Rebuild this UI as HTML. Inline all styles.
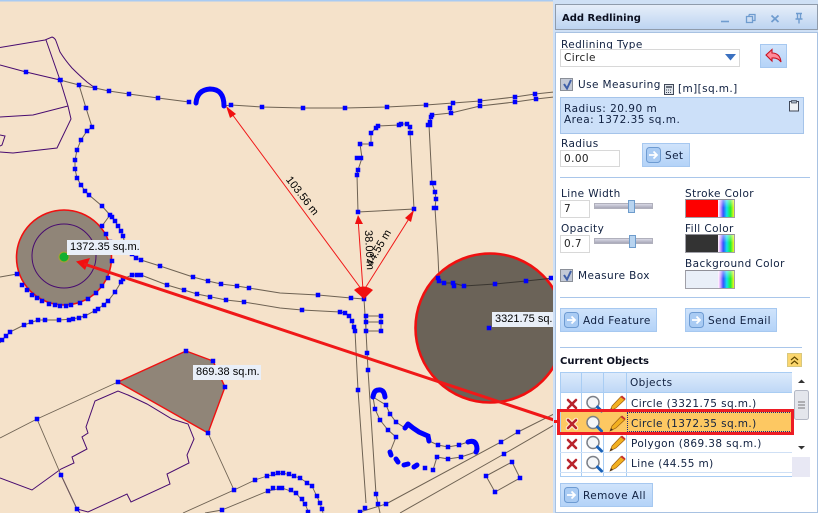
<!DOCTYPE html>
<html><head><meta charset="utf-8">
<style>
html,body{margin:0;padding:0;width:818px;height:513px;overflow:hidden;background:#f5e2ca}
*{box-sizing:border-box}
#map{position:absolute;left:0;top:0}
#panel{position:absolute;left:554px;top:0;width:264px;height:513px;background:#cfe0f5;overflow:hidden}
.a{position:absolute}
.t{position:absolute;font:10.5px "DejaVu Sans",sans-serif;letter-spacing:.4px;color:#102040;white-space:nowrap;line-height:12px;margin-top:1px}
.in{position:absolute;background:#fff;border:1px solid #d8d8d8;font:10.5px "DejaVu Sans",sans-serif;letter-spacing:.4px;color:#222;padding:1px 0 0 3px;white-space:nowrap}
.btn{position:absolute;background:linear-gradient(#cfe3fb,#b4d3f8);border:1px solid #a6c8f0;font:10.5px "DejaVu Sans",sans-serif;letter-spacing:.4px;color:#102040;white-space:nowrap;line-height:22px}
.btn svg{position:absolute;left:3px;top:3px}
.btn span{position:absolute;top:1px}
.hr{position:absolute;height:1px;background:#a9c6ea}
.cb{position:absolute;width:13px;height:13px;background:#c3c9d6;border:1px solid #8a8f98}
.sw{position:absolute;left:131px;width:50px;height:19px;border:1px solid #a0a0a8;border-top-color:#909098}
.sw i{position:absolute;left:32px;top:0;width:16px;height:17px;background:linear-gradient(rgba(255,255,255,.45),rgba(255,255,255,0) 45%),linear-gradient(90deg,#fff 0,rgba(255,255,255,0) 35%),linear-gradient(90deg,#f020f0,#3040ff 30%,#10e0f0 55%,#20f030 78%,#f8f820)}
.trk{position:absolute;left:40px;width:59px;height:6px;background:linear-gradient(#d8d8e4,#a8a8b8);border:1px solid #b0b0bc}
.th{position:absolute;width:7px;height:13px;background:#b8d4f0;border:1px solid #6e9ccc}
.ln{position:absolute;background:#a9cdf3}
.cell{position:absolute;font:10.5px "DejaVu Sans",sans-serif;letter-spacing:.4px;color:#102040;white-space:nowrap;line-height:20px;left:77px;margin-top:1px}
.ml{position:absolute;font:11px "Liberation Sans",sans-serif;color:#000;white-space:nowrap;line-height:14px}
.box{background:#e9eff8;padding-left:3px;height:15px}
</style></head>
<body>
<svg id="map" width="554" height="513" viewBox="0 0 554 513" xmlns="http://www.w3.org/2000/svg">
<rect width="554" height="513" fill="#f5e2ca"/>
<rect width="554" height="1.5" fill="#a9cbf2"/>
<g fill="none" stroke="#480c70" stroke-width="1">
<path d="M0 47.500L45 40L52 37Q55 38 56 41L60 52Q65 60 72 68Q80 76 87 82L95 88"/>
<path d="M46 40L60 80L68 106L71 119L57 148L13 153L0 152"/>
<path d="M0 117L33 115L68 106"/>
<path d="M0 65L26 72L60 80"/>
<path d="M0 135L5 136L2 145L0 146"/>
<path d="M0 478L32 490L61 469L74 463L72 457L87 449L82 437L88 433L86 427L95 401L118 391L128 395L147 404L172 419L188 424L194 439L187 455L189 463L167 474L170 484L131 502L127 494L88 512L77 509L61 475"/>
<path d="M77 509L80 513"/>
</g>
<g fill="none" stroke="#6e6253" stroke-width="1">
<path d="M60 80L79 85L95 88L109 91L129 94L158 98L189 102M224 106L231 105L262 107L303 108L345 108L387 107L426 105L453 103L480 101L515 97L535 94L554 92"/>
<path d="M429 125L430 122L431 117L432 115L451 113L480 106L515 102L536 99L554 97M453 103L450 108L451 113"/>
<path d="M429 125L432 183L435 192L436 199L435 208L438 256L439 279"/>
<path d="M358 212L414 209L410 133L410 127L407 124L401 124L399 125L378 126L376 128L371 133L371 144L360 144L362 158L358 170L357 175L358 212"/>
<path d="M79 85L86 108L92 127L87 131L81 140L77 150L75 160L75 169L77 178L81 185L85 191L89 195L102 206L110 215L115 221L118 226L121 231L123 236L125 244"/>
<path d="M110 215L102 226"/>
<path d="M136 258L141 260L160 266L193 277L208 281L221 284L237 286L249 288L280 293L318 295L351 298L364 299"/>
<path d="M0 277L17 274"/>
<path d="M141 275L132 275L123 279L115 292L108 301L98 309L85 316L73 319L59 320L38 320L24 325L10 332L2 340L0 343"/>
<path d="M141 275L167 285L184 290L197 294L226 300L244 302L280 308L302 310L340 312L345 313L349 316L352 321L355 331L358 390L366 503"/>
<path d="M364 299L366 331L368 370L376 494L380 513"/>
<path d="M366 316H381V331H366V316M366 322H381" stroke-width=".9"/>
<path d="M373 397L386 405L390 414L396 422L405 428M429 441L438 445L448 447L459 445L468 442M476 452L461 457L448 459L437 457L433 470M390 452L396 437L388 430L380 420L375 409L373 397"/>
<path d="M360 512L386 504L501 442L518 432L554 414M400 513L504 454L554 425"/>
<path d="M512 462L520 478L495 492L486 476Z"/>
<path d="M118 382L37 419L0 438M37 419L61 475L77 509M208 433L234 490L183 513M234 490L255 480L267 476L283 473L300 478L312 486L320 503L323 513M222 510L268 491L282 488L296 493L305 504L309 513" stroke-width=".9"/>
<path d="M222 510L205 513"/>
</g>
<circle cx="64" cy="257.500" r="47.500" fill="#908578" stroke="#f01010" stroke-width="1.600"/>
<circle cx="64" cy="256" r="32" fill="none" stroke="#480c70" stroke-width="1"/>
<path d="M118 382L186 351L213 361L225 387L208 433Z" fill="#908578" stroke="#f01010" stroke-width="1.400"/>
<circle cx="490" cy="328" r="74.500" fill="#6b6358" stroke="#f01010" stroke-width="2.600"/>
<path d="M439 281L444 283L453 283L464 286L495 284L526 281L554 278" fill="none" stroke="#3a3630" stroke-width="1"/>
<g fill="none" stroke="#00f" stroke-linecap="round">
<path d="M196 103Q197 90 210 89Q224 89 224 106" stroke-width="5"/>
<path d="M373 397Q374 390 378.500 390Q384 389 385 397" stroke-width="5"/>
<path d="M468 442Q474 440 476 444Q478 449 476 452" stroke-width="5"/>
<path d="M405 428L408 424M408 424L413 428L419 432L428 436L429 441M390 452L391 455M396 459L398 462M404 465L408 464M414 467L417 465" stroke-width="5"/>
</g>
<path stroke="#00f" stroke-width="4.500" stroke-linecap="square" fill="none" d="M26 72h0M60 80h.5M79 85h0M95 88h0M109 91h0M129 94h0M158 98h0M189 102h0M231 105h0M262 107h0M303 108h0M345 108h0M387 107h0M426 105h0M453 103h0M480 101h0M515 97h0M535 94h0M450 108h0M451 113h0M480 106h0M515 102h0M536 99h0M432 115h0M431 117h0M430 122h0M428 125h2M432 183h2M435 192h0M436 199h0M434 208h2M358 212h0M414 209h0M410 133h1M410 127h0M407 124h0M401 124h0M399 125h0M378 126h0M376 128h0M371 133h0M371 144h0M360 144h0M357 158h4M358 170h0M357 175h0M86 108h0M92 127h0M87 131h0M81 140h0M77 150h0M75 160h0M75 169h0M77 178h0M81 185h0M85 191h0M89 195h0M102 206h0M110 215h0M112 217h0M115 221h0M118 226h0M121 231h0M123 236h0M125 244h0M128 250h0M132 254h0M136 258h0M141 260h0M160 266h0M193 277h0M208 281h0M221 284h0M237 286h0M249 288h0M318 295h0M351 298h0M364 299h0M102 226h0M106 234h0M110 242h0M111 252h0M112 261h0M108 278h0M102 286h0M96 293h0M88 299h0M80 303h0M71 305h0M66 306h0M60 306h0M55 305h0M49 304h0M42 301h0M37 298h0M32 295h0M27 290h0M22 285h0M17 274h0M141 275h0M137 275h0M132 275h0M123 279h0M121 282h0M115 292h0M108 301h0M104 305h0M98 309h0M95 311h0M85 316h0M79 318h0M73 319h0M69 320h0M59 320h0M45 320h0M38 320h0M31 322h0M24 325h0M10 332h0M6 336h0M2 340h0M167 285h0M184 290h0M197 294h0M210 297h0M226 300h0M244 302h0M302 310h0M340 312h0M345 313h0M349 316h0M352 321h0M354 327h0M355 331h0M358 390h0M365 508h0M360 512h0M366 316h0M381 316h0M381 322h0M381 331h0M366 331h0M366 322h0M367 353h0M368 370h0M376 494h0M378 504h0M386 504h0M386 405h0M390 414h0M396 422h0M438 445h0M448 447h0M459 445h0M461 457h0M448 459h0M437 457h0M433 470h0M425 468h0M396 437h0M388 430h0M380 420h0M375 409h0M501 442h0M518 432h0M504 454h0M512 462h0M520 478h0M495 492h0M486 476h0M438 278h0M439 281h0M444 283h0M453 283h0M454 286h0M464 286h0M495 284h0M526 281h0M551 278h0M489 328h0M118 382h0M186 351h0M213 361h0M225 387h0M208 433h0M37 419h0M61 475h0M77 509h0M234 490h0M255 480h0M267 476h0M273 474h0M278 473h0M222 510h0M268 491h0M273 488h0M279 488h0M283 473h0M289 474h0M294 476h0M300 478h0M307 483h0M312 486h0M317 496h0M320 503h0M322 509h0M282 488h0M291 490h0M296 493h0M302 499h0M305 504h0M308 512h0"/>
<g stroke="#f01818" stroke-width="1" fill="none">
<path d="M362 290L229 110M363 290L358 218M364 290L412 214"/>
</g>
<g fill="#f01010">
<path d="M226 106L236 114L230 118Z"/>
<path d="M358 215L363 224L355 224Z"/>
<path d="M414 210L411 222L405 218Z"/>
<path d="M354 290Q363 283 373 290L364 299Z"/>
<path d="M76 261.500L90 258L85 270Z"/>
</g>
<path d="M84 264L557 421" stroke="#f01818" stroke-width="3" fill="none"/>
<circle cx="64" cy="257" r="5" fill="#12b030" stroke="#a8a030" stroke-width="1"/>
</svg>
<div class="ml box" style="left:67px;top:240px;width:73px">1372.35 sq.m.</div>
<div class="ml box" style="left:193px;top:365px;width:68px">869.38 sq.m.</div>
<div class="ml box" style="left:492px;top:312px;width:62px;overflow:hidden">3321.75 sq.m.</div>
<div class="ml" style="left:279px;top:189px;transform:rotate(52deg)">103.56 m</div>
<div class="ml" style="left:349px;top:243px;transform:rotate(87deg)">38.00 m</div>
<div class="ml" style="left:359px;top:241px;transform:rotate(-60deg)">44.55 m</div>
<div class="a" style="left:553px;top:0;width:1px;height:513px;background:#cfe0f5"></div>

<div id="panel">
<div class="a" style="left:1px;top:4px;width:263px;height:26px;background:linear-gradient(#e6eef9,#bdd4f1);border:1px solid #8f9bab"></div>
<div class="a" style="left:1px;top:32px;width:263px;height:481px;background:#fff;border:1px solid #a8c2e2"></div>
<div class="t" style="left:8px;top:12px;font-weight:bold;font-size:10px;letter-spacing:0;color:#0c1020">Add Redlining</div>
<svg class="a" style="left:165px;top:10px" width="90" height="14" fill="none" stroke="#6f9ccf" stroke-width="1.600"><path d="M2 11.500H10"/><path d="M30 4.500h6v6h-2M30 4.500v2M27.500 6.500h6v6h-6z" stroke-width="1.300"/><path d="M52.500 5.500L59.500 12M59.500 5.500L52.500 12" stroke-width="1.800"/><path d="M77 3.500h6M78.500 4v5h3V4M76.500 9h7M80 9.500v4" stroke-width="1.400"/></svg>

<div class="t" style="left:7px;top:38px">Redlining Type</div>
<div class="in" style="left:6px;top:49px;width:180px;height:18px;line-height:15px">Circle</div>
<svg class="a" style="left:171px;top:54px" width="12" height="8"><path d="M0 0H11L5.500 6.500Z" fill="#3a70c0"/></svg>
<div class="btn" style="left:206px;top:44px;width:27px;height:24px"><svg style="left:4px;top:3px" width="18" height="16"><path d="M1 7L7 1.500V5Q15 5 16 14Q13 9.500 7 10V13Z" fill="#ff8a98" stroke="#c81020" stroke-width="1.100"/></svg></div>

<div class="cb" style="left:6px;top:78px"><svg class="a" style="left:1px;top:0" width="11" height="11"><path d="M2 5L5 9.500L9 1" fill="none" stroke="#3f5fa8" stroke-width="2"/></svg></div>
<div class="t" style="left:24px;top:78px">Use Measuring</div>
<svg class="a" style="left:110px;top:84px" width="10" height="11"><rect x=".5" y=".5" width="9" height="10" fill="#dfe4ea" stroke="#404858"/><path d="M2 3h6" stroke="#404858" stroke-width="1.500"/><path d="M2 6h6M2 8.500h6" stroke="#404858" stroke-dasharray="1 1"/></svg>
<div class="t" style="left:124px;top:82px">[m][sq.m.]</div>
<div class="a" style="left:6px;top:97px;width:244px;height:37px;background:#cce0f9;border:1px solid #a5c4ea"></div>
<div class="t" style="left:10px;top:102px;letter-spacing:.5px">Radius: 20.90 m</div>
<div class="t" style="left:10px;top:113px;letter-spacing:.5px">Area: 1372.35 sq.m.</div>
<svg class="a" style="left:235px;top:100px" width="11" height="12"><rect x=".5" y="1.500" width="9" height="9.500" fill="#eef2f6" stroke="#404858"/><rect x="2.500" y=".5" width="5" height="2.500" fill="#a0b0c0" stroke="#404858" stroke-width=".7"/></svg>
<div class="t" style="left:7px;top:137px">Radius</div>
<div class="in" style="left:6px;top:150px;width:60px;height:17px;line-height:14px">0.00</div>
<div class="btn" style="left:88px;top:143px;width:48px;height:24px"><svg width="16" height="17"><rect x=".5" y=".5" width="14" height="15" rx="3" fill="#a9cbf3" stroke="#6d9bd2"/><path d="M3 8H11M7.500 4.500L11 8L7.500 11.500" fill="none" stroke="#fff" stroke-width="1.800"/></svg><span style="left:22px">Set</span></div>

<div class="hr" style="left:6px;top:177px;width:250px"></div>
<div class="t" style="left:7px;top:187px">Line Width</div>
<div class="in" style="left:6px;top:200px;width:30px;height:18px;line-height:15px">7</div>
<div class="trk" style="top:203px"></div><div class="th" style="left:74px;top:200px"></div>
<div class="t" style="left:7px;top:222px">Opacity</div>
<div class="in" style="left:6px;top:235px;width:30px;height:18px;line-height:15px">0.7</div>
<div class="trk" style="top:238px"></div><div class="th" style="left:75px;top:235px"></div>
<div class="cb" style="left:6px;top:269px"><svg class="a" style="left:1px;top:0" width="11" height="11"><path d="M2 5L5 9.500L9 1" fill="none" stroke="#3f5fa8" stroke-width="2"/></svg></div>
<div class="t" style="left:24px;top:269px">Measure Box</div>

<div class="t" style="left:131px;top:187px">Stroke Color</div>
<div class="sw" style="top:199px;background:#fe0000"><i></i></div>
<div class="t" style="left:131px;top:222px">Fill Color</div>
<div class="sw" style="top:234px;background:#333"><i></i></div>
<div class="t" style="left:131px;top:257px">Background Color</div>
<div class="sw" style="top:270px;background:#e9eff8"><i></i></div>
<div class="hr" style="left:6px;top:297px;width:250px"></div>

<div class="btn" style="left:6px;top:308px;width:97px;height:24px"><svg width="16" height="17"><rect x=".5" y=".5" width="14" height="15" rx="3" fill="#a9cbf3" stroke="#6d9bd2"/><path d="M3 8H11M7.500 4.500L11 8L7.500 11.500" fill="none" stroke="#fff" stroke-width="1.800"/></svg><span style="left:22px">Add Feature</span></div>
<div class="btn" style="left:131px;top:308px;width:92px;height:24px"><svg width="16" height="17"><rect x=".5" y=".5" width="14" height="15" rx="3" fill="#a9cbf3" stroke="#6d9bd2"/><path d="M3 8H11M7.500 4.500L11 8L7.500 11.500" fill="none" stroke="#fff" stroke-width="1.800"/></svg><span style="left:22px">Send Email</span></div>
<div class="hr" style="left:6px;top:347px;width:242px"></div>
<div class="t" style="left:6px;top:355px;font-weight:bold;font-size:10px;letter-spacing:0;color:#0c1020">Current Objects</div>
<div class="a" style="left:233px;top:353px;width:15px;height:14px;background:#fbd66e;border:1px solid #d8c880"></div>
<svg class="a" style="left:236px;top:356px" width="9" height="9" fill="none" stroke="#604800" stroke-width="1.200"><path d="M1 4L4.500 1L8 4M1 8L4.500 5L8 8"/></svg>

<div class="a" style="left:6px;top:372px;width:232px;height:20px;background:linear-gradient(#dceafb,#bfd8f6);border-top:1px solid #a9cdf3"></div>
<div class="cell" style="left:76px;top:372px">Objects</div>
<div class="ln" style="left:6px;top:372px;width:1px;height:105px"></div>
<div class="ln" style="left:27px;top:372px;width:1px;height:105px"></div>
<div class="ln" style="left:49px;top:372px;width:1px;height:105px"></div>
<div class="ln" style="left:72px;top:372px;width:1px;height:105px"></div>
<div class="ln" style="left:6px;top:392px;width:232px;height:1px"></div>
<div class="a" style="left:7px;top:412px;width:231px;height:20px;background:#fdc862"></div>
<div class="ln" style="left:6px;top:452px;width:232px;height:1px;background:#cfe0f5"></div>
<div class="ln" style="left:6px;top:472px;width:232px;height:1px;background:#cfe0f5"></div>
<div class="ln" style="left:6px;top:476px;width:232px;height:1px"></div>
<div class="a" style="left:73px;top:412px;width:165px;height:20px;border:1px dotted #1a2a80"></div>
<div class="cell" style="top:393px">Circle (3321.75 sq.m.)</div>
<div class="cell" style="top:413px">Circle (1372.35 sq.m.)</div>
<div class="cell" style="top:433px">Polygon (869.38 sq.m.)</div>
<div class="cell" style="top:453px">Line (44.55 m)</div>

<svg class="a" style="left:6px;top:393px" width="68" height="84" fill="none">
<defs><g id="r"><path d="M8 7L16 15M16 7L8 15" stroke="#fff" stroke-width="4.500" stroke-linecap="round" opacity=".75"/><path d="M8 7L16 15M16 7L8 15" stroke="#b8242c" stroke-width="2.600" stroke-linecap="round"/><circle cx="33" cy="9.500" r="6" fill="#f4f6f8" stroke="#7c8088" stroke-width="1.500"/><path d="M37.500 14L41.500 18" stroke="#1a62b8" stroke-width="3" stroke-linecap="round"/><path d="M50 18L52 13L61 3.500L65 6.500L56 15Z" fill="#f2b020" stroke="#a06010" stroke-width=".7"/><path d="M60.500 4L62 2.500L65.500 5.500L64.500 7Z" fill="#c83030"/><path d="M50 18L51 15L53 17Z" fill="#403020"/></g></defs>
<use href="#r" y="0"/><use href="#r" y="20"/><use href="#r" y="40"/><use href="#r" y="60"/>
</svg>
<div class="a" style="left:240px;top:372px;width:16px;height:85px;background:#fff"></div>
<div class="a" style="left:238px;top:457px;width:18px;height:20px;background:#e8e8f4"></div>
<svg class="a" style="left:240px;top:376px" width="16" height="80"><path d="M4 7L7.500 3.500L11 7Z" fill="#333"/><path d="M4 70L7.500 73.500L11 70Z" fill="#333"/><rect x=".5" y="14.500" width="14" height="29" rx="2" fill="#e4e6ec" stroke="#b4b8c4"/><path d="M4 26h7M4 29h7M4 32h7" stroke="#777"/></svg>
<div class="btn" style="left:6px;top:483px;width:93px;height:24px"><svg width="16" height="17"><rect x=".5" y=".5" width="14" height="15" rx="3" fill="#a9cbf3" stroke="#6d9bd2"/><path d="M3 8H11M7.500 4.500L11 8L7.500 11.500" fill="none" stroke="#fff" stroke-width="1.800"/></svg><span style="left:22px">Remove All</span></div>
<div class="a" style="left:0;top:419.500px;width:4px;height:3px;background:#f01818"></div>
<div class="a" style="left:3px;top:409px;width:237px;height:26px;border:3px solid #ed1c24"></div>
</div>
</body></html>
